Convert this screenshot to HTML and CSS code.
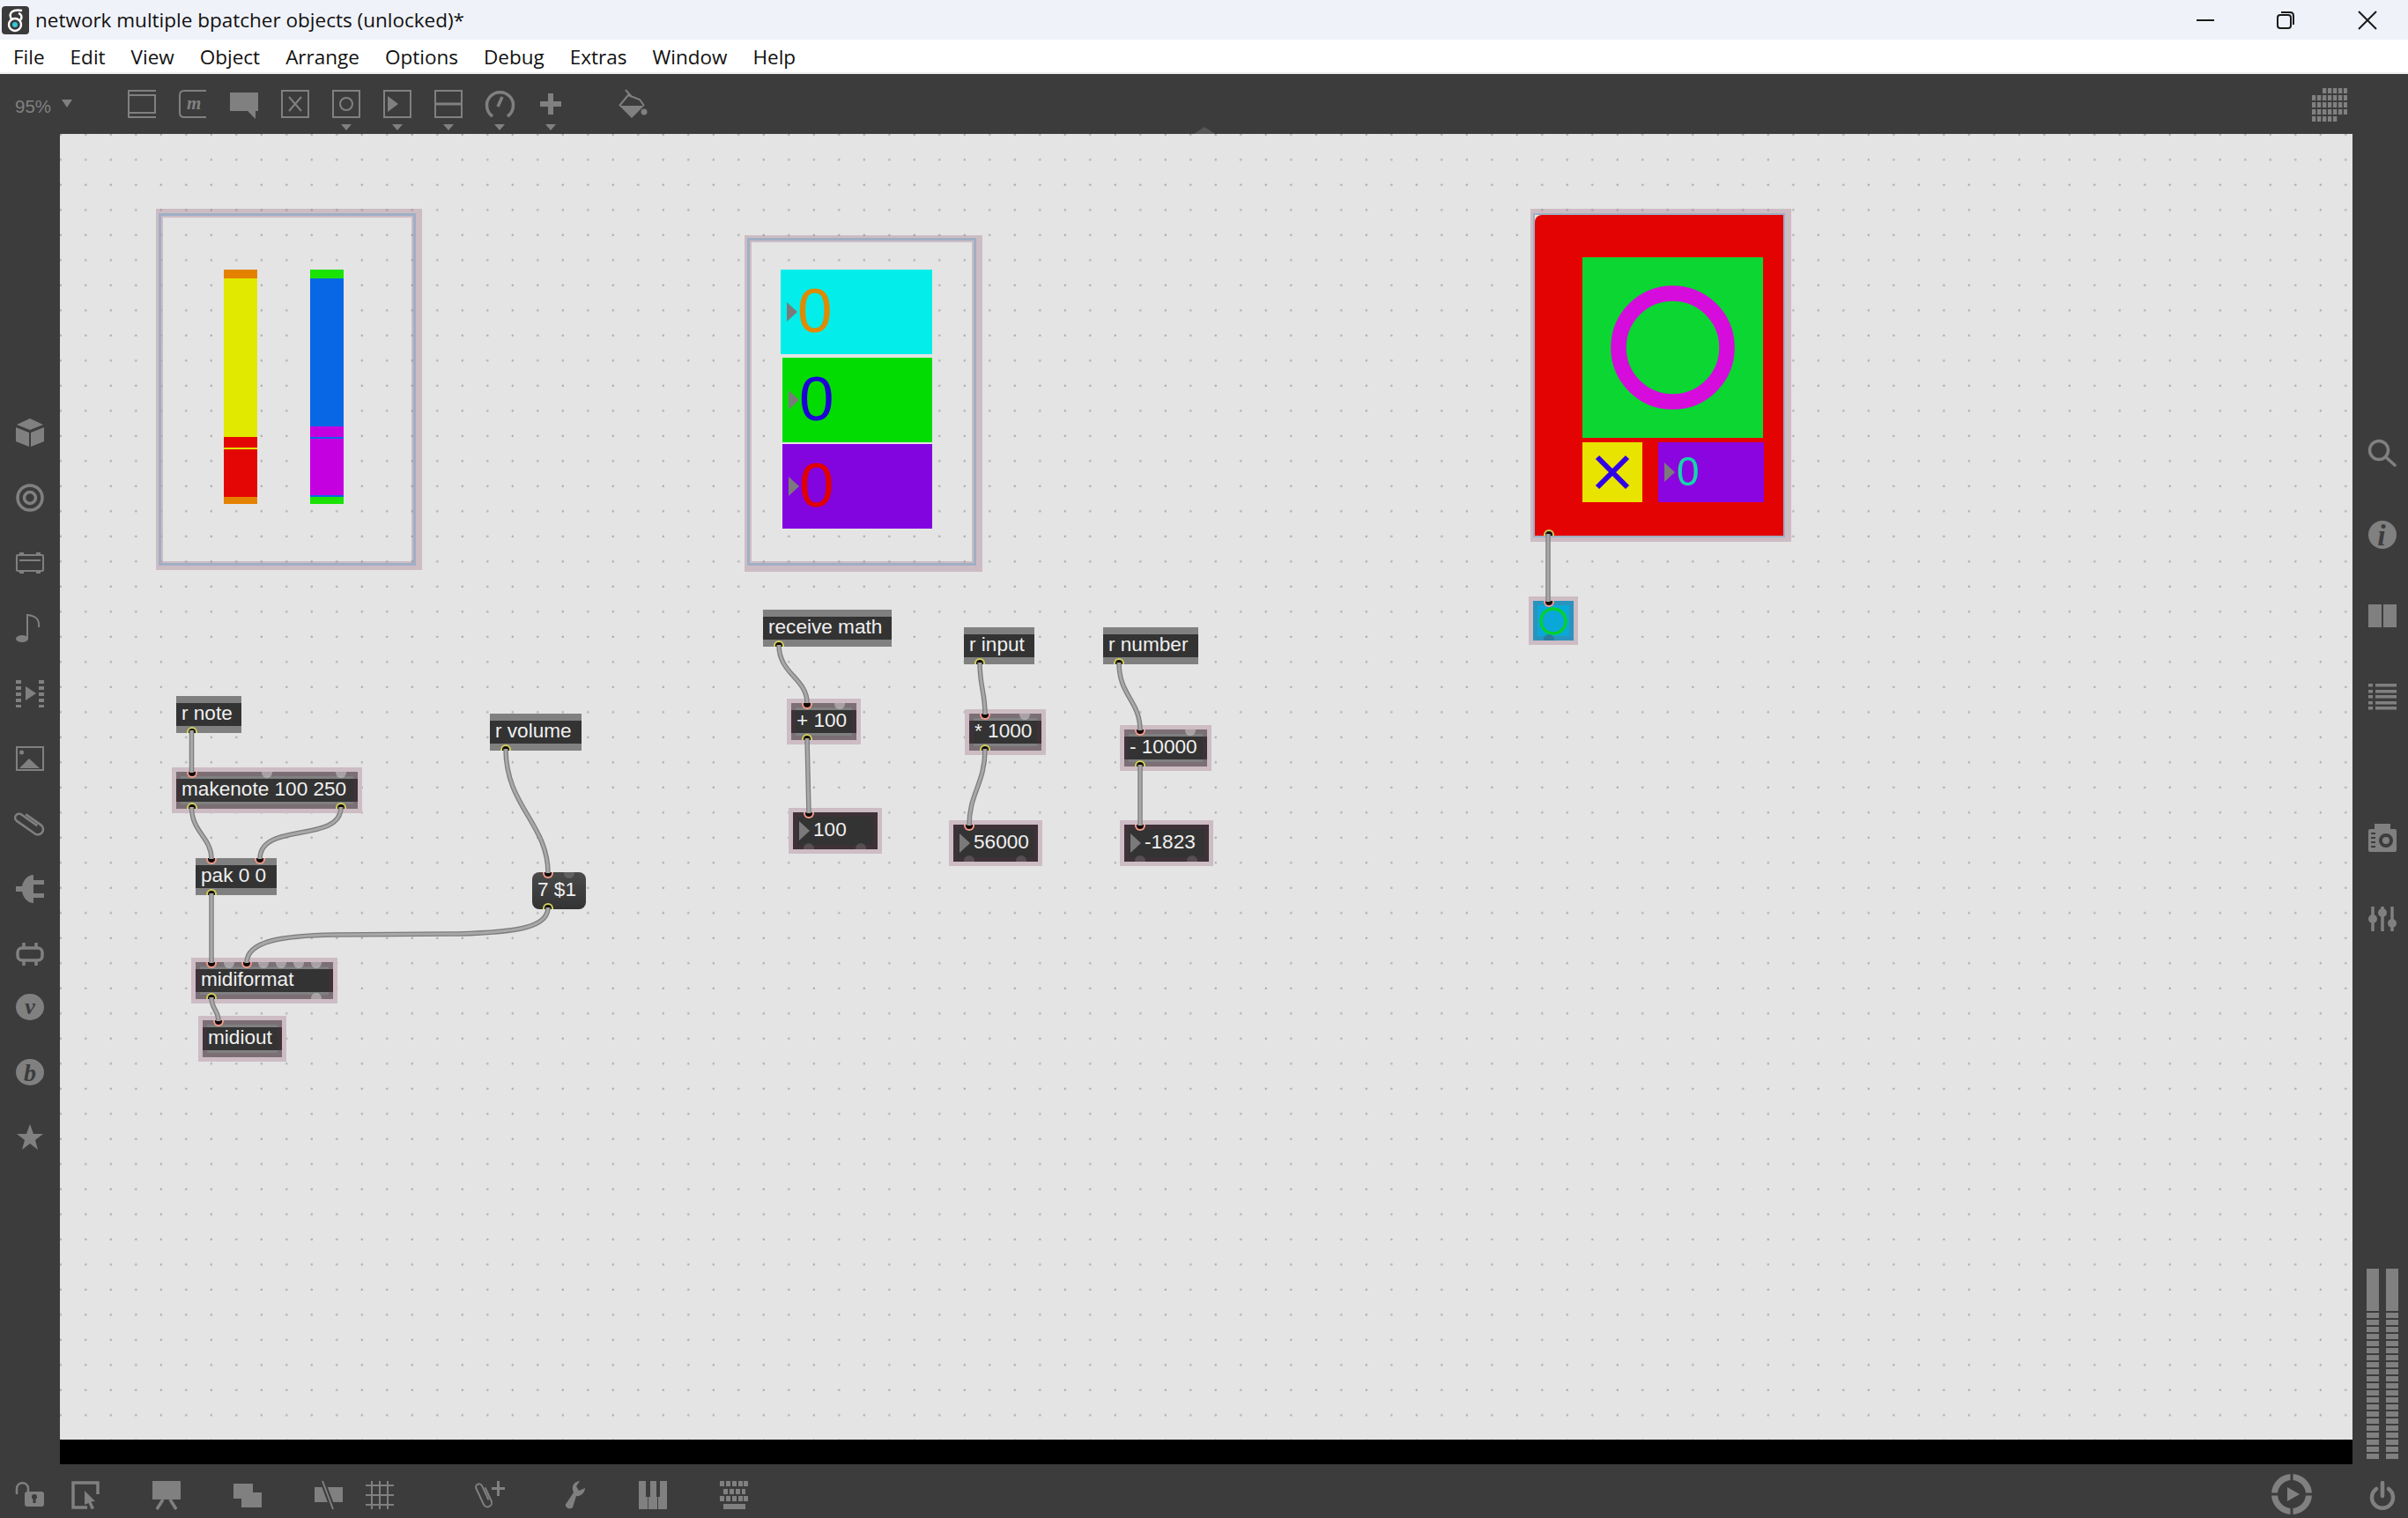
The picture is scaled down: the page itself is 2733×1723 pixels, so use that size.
FILE: index.html
```html
<!DOCTYPE html>
<html lang="en">

<head>
    <meta charset="UTF-8">
    <title>network multiple bpatcher objects (unlocked)*</title>
    <link rel="stylesheet" href="styles.css">
</head>

<body>
    <header class="titlebar">
        <svg class="app-icon" viewBox="0 0 31 32">
            <rect width="31" height="32" rx="4" fill="#3a3a3a" />
            <circle cx="15" cy="21" r="7" fill="none" stroke="#fff" stroke-width="2.4" />
            <path d="M11 15C7 7 13 3 23 5M21 16C24 12 22 9 19 8" fill="none" stroke="#fff" stroke-width="2.4" />
            <circle cx="15" cy="21" r="3" fill="#35c8d8" />
        </svg>
        <span class="title-text">network multiple bpatcher objects (unlocked)*</span>
        <div class="window-buttons">
            <svg class="win-min" viewBox="0 0 20 20"><path d="M0 10H20" /></svg>
            <svg viewBox="0 0 20 20"><rect x="1" y="4" width="15" height="15" rx="3" /><path d="M5 1H15Q19 1 19 5V15" /></svg>
            <svg viewBox="0 0 20 20"><path d="M0 0L20 20M20 0L0 20" /></svg>
        </div>
    </header>

    <nav class="menubar">
        <span>File</span>
        <span>Edit</span>
        <span>View</span>
        <span>Object</span>
        <span>Arrange</span>
        <span>Options</span>
        <span>Debug</span>
        <span>Extras</span>
        <span>Window</span>
        <span>Help</span>
    </nav>

    <div class="toolbar">
        <span class="zoom-level">95%</span>
        <span class="zoom-caret"></span>
        <div class="tools">
            <div class="tool"><svg class="ico" viewBox="0 0 32 32"><path class="line" d="M0 1H32M0 6H32M0 26H32M0 31H32M1 0V32M31 6V26" /></svg></div>
            <div class="tool"><svg class="ico" viewBox="0 0 32 32"><path class="line" d="M31 1H6Q1 1 1 6V26Q1 31 6 31H31" /><text class="ico-serif bold" x="9" y="22" font-size="21">m</text></svg></div>
            <div class="tool"><svg class="ico" viewBox="0 0 32 32"><path d="M0 3H32V24H29V33L20 24H0Z" /></svg></div>
            <div class="tool"><svg class="ico" viewBox="0 0 32 32"><rect class="line" x="1" y="1" width="30" height="30" /><path class="line" d="M9 8L23 24M23 8L9 24" /></svg></div>
            <div class="tool"><svg class="ico" viewBox="0 0 32 32"><rect class="line" x="1" y="1" width="30" height="30" /><circle class="line" cx="16" cy="16" r="7" /></svg><span class="tool-caret"></span></div>
            <div class="tool"><svg class="ico" viewBox="0 0 32 32"><rect class="line" x="1" y="1" width="30" height="30" /><path d="M5 7L17 16L5 25Z" /></svg><span class="tool-caret"></span></div>
            <div class="tool"><svg class="ico" viewBox="0 0 32 32"><rect class="line" x="1" y="1" width="30" height="30" /><path d="M2 14.500H30V17.500H2Z" /></svg><span class="tool-caret"></span></div>
            <div class="tool"><svg class="ico" viewBox="0 0 32 32"><path class="thick" d="M8 30A15 15 0 1 1 25 30" /><path class="thick" d="M14 19L19 8" /></svg><span class="tool-caret"></span></div>
            <div class="tool"><svg class="ico" viewBox="0 0 32 32"><path d="M13 4H19V13H28V19H19V28H13V19H4V13H13Z" /></svg><span class="tool-caret"></span></div>
        </div>
        <svg class="ico paint" viewBox="0 0 34 32"><path d="M2 18H30L16 32Z" /><path class="line" d="M2 18L12 6L25 11L30 18M9 0L16 8" /><circle cx="30" cy="25" r="3.500" /></svg>
        <svg class="ico patcher-grid" viewBox="0 0 40 38">
            <defs><pattern id="cells" width="6" height="8" patternUnits="userSpaceOnUse"><rect width="4.300" height="6" /></pattern></defs>
            <path fill="url(#cells)" d="M12 0H42V32H30V40H0V8H12Z" />
        </svg>
    </div>

    <div class="workspace">
        <aside class="sidebar left-bar">
            <div class="slot"><svg class="ico" viewBox="0 0 32 32"><path d="M16 0L31 7L16 13L1 7ZM0 10L15 16V32L0 26ZM32 10L17 16V32L32 26Z" /></svg></div>
            <div class="slot"><svg class="ico" viewBox="0 0 32 32"><circle class="thick" cx="16" cy="16" r="14" /><circle class="thick" cx="16" cy="16" r="6.500" /></svg></div>
            <div class="slot"><svg class="ico" viewBox="0 0 32 32"><rect class="line" x="1" y="7" width="30" height="18" rx="1" /><path class="line" d="M4 13H28" /><path d="M4 4H9V8H4ZM23 4H28V8H23ZM4 24H9V28H4ZM23 24H28V28H23Z" /></svg></div>
            <div class="slot"><svg class="ico" viewBox="0 0 32 32"><ellipse cx="7" cy="28" rx="7" ry="4" /><path class="line" d="M13 28V1C22 2 27 5 26 15" /></svg></div>
            <div class="slot"><svg class="ico" viewBox="0 0 32 32"><path d="M0 1H6V5H0ZM0 8H6V12H0ZM0 15H6V19H0ZM0 22H6V26H0ZM0 29H6V32H0ZM26 1H32V5H26ZM26 8H32V12H26ZM26 15H32V19H26ZM26 22H32V26H26ZM26 29H32V32H26ZM11 8L23 16L11 24Z" /></svg></div>
            <div class="slot"><svg class="ico" viewBox="0 0 32 32"><rect class="line" x="1" y="3" width="30" height="26" /><circle cx="6.500" cy="9" r="2.500" /><path d="M4 27L15 16L27 27Z" /></svg></div>
            <div class="slot"><svg class="ico" viewBox="0 0 32 32"><path class="line-wide" transform="rotate(-55 16 16)" d="M22 6V27A6 6 0 0 1 10 27V2A4.500 4.500 0 0 1 19 2V24" /></svg></div>
            <div class="slot"><svg class="ico" viewBox="0 0 32 32"><path d="M20 0V32C13 32 8 25 7 19H0V13H7C8 7 13 0 20 0ZM20 6H32V11H20ZM20 21H32V26H20Z" /></svg></div>
            <div class="slot"><svg class="ico" viewBox="0 0 32 32"><rect class="thick" x="2" y="9" width="28" height="14" rx="5" /><path class="thick" d="M9 3V9M23 3V9M9 23V29M23 23V29" /></svg></div>
            <div class="slot tight"><svg class="ico" viewBox="0 0 32 32"><ellipse cx="16" cy="16" rx="16" ry="15" /><text class="ico-serif cut bold" x="16" y="24" font-size="26" text-anchor="middle">v</text></svg></div>
            <div class="slot"><svg class="ico" viewBox="0 0 32 32"><ellipse cx="16" cy="16" rx="16" ry="15" /><text class="ico-serif cut bold" x="16" y="26" font-size="28" text-anchor="middle">b</text></svg></div>
            <div class="slot"><svg class="ico" viewBox="0 0 32 32"><path d="M16 1L20 12H31L22 19L25 30L16 23L7 30L10 19L1 12H12Z" /></svg></div>
        </aside>

        <div class="patcher-column">
            <main class="canvas">
                <span class="notch"></span>

                <div class="bpatcher bp-sliders">
                    <div class="slider slider-warm"></div>
                    <div class="slider slider-cool"></div>
                </div>

                <div class="bpatcher bp-numbers">
                    <div class="big-num num-cyan"><span class="arrow"></span>0</div>
                    <div class="big-num num-green"><span class="arrow"></span>0</div>
                    <div class="big-num num-purple"><span class="arrow"></span>0</div>
                </div>

                <div class="bpatcher bp-panel">
                    <div class="panel-red">
                        <svg class="panel-button" viewBox="0 0 205 205"><circle cx="102.500" cy="102.500" r="61.500" /></svg>
                        <div class="panel-row">
                            <svg class="panel-toggle" viewBox="0 0 68 68"><path d="M17 17L51 51M51 17L17 51" /></svg>
                            <div class="panel-num"><span class="arrow"></span>0</div>
                        </div>
                    </div>
                    <div class="ports bottom"><span class="port out"></span></div>
                </div>

                <div class="obj o-rnote">r note
                    <div class="ports bottom"><span class="port out"></span></div>
                </div>
                <div class="obj hot o-makenote">makenote 100 250
                    <div class="ports top"><span class="port in"></span><span class="port idle"></span><span class="port idle"></span></div>
                    <div class="ports bottom"><span class="port out"></span><span class="port out"></span></div>
                </div>
                <div class="obj o-pak">pak 0 0
                    <div class="ports top"><span class="port in"></span><span class="port in"></span></div>
                    <div class="ports bottom"><span class="port out"></span></div>
                </div>
                <div class="obj o-rvolume">r volume
                    <div class="ports bottom"><span class="port out"></span></div>
                </div>
                <div class="obj message o-seven">7 $1
                    <div class="ports top"><span class="port in"></span><span class="port idle"></span></div>
                    <div class="ports bottom"><span class="port out"></span></div>
                </div>
                <div class="obj hot o-midiformat">midiformat
                    <div class="ports top"><span class="port in"></span><span class="port idle"></span><span class="port in"></span><span class="port idle"></span><span class="port idle"></span><span class="port idle"></span><span class="port idle"></span></div>
                    <div class="ports bottom"><span class="port out"></span><span class="port idle"></span></div>
                </div>
                <div class="obj hot o-midiout">midiout
                    <div class="ports top"><span class="port in"></span></div>
                </div>

                <div class="obj o-receive">receive math
                    <div class="ports bottom"><span class="port out"></span></div>
                </div>
                <div class="obj hot o-plus">+ 100
                    <div class="ports top"><span class="port in"></span><span class="port idle"></span></div>
                    <div class="ports bottom"><span class="port out"></span></div>
                </div>
                <div class="obj hot numbox o-n100"><span class="arrow"></span>100
                    <div class="ports top"><span class="port in"></span></div>
                    <div class="ports bottom"><span class="port idle"></span><span class="port idle"></span></div>
                </div>

                <div class="obj o-rinput">r input
                    <div class="ports bottom"><span class="port out"></span></div>
                </div>
                <div class="obj hot o-times">* 1000
                    <div class="ports top"><span class="port in"></span><span class="port idle"></span></div>
                    <div class="ports bottom"><span class="port out"></span></div>
                </div>
                <div class="obj hot numbox o-n56000"><span class="arrow"></span>56000
                    <div class="ports top"><span class="port in"></span></div>
                    <div class="ports bottom"><span class="port idle"></span><span class="port idle"></span></div>
                </div>

                <div class="obj o-rnumber">r number
                    <div class="ports bottom"><span class="port out"></span></div>
                </div>
                <div class="obj hot o-minus">- 10000
                    <div class="ports top"><span class="port in"></span><span class="port idle"></span></div>
                    <div class="ports bottom"><span class="port out"></span></div>
                </div>
                <div class="obj hot numbox o-n1823"><span class="arrow"></span>-1823
                    <div class="ports top"><span class="port in"></span></div>
                    <div class="ports bottom"><span class="port idle"></span><span class="port idle"></span></div>
                </div>

                <div class="bang">
                    <svg viewBox="0 0 46 45"><circle cx="23" cy="23" r="14" /></svg>
                    <div class="ports top"><span class="port in"></span></div>
                    <div class="ports bottom"><span class="port idle"></span></div>
                </div>

                <!-- cords use page coordinates, the viewBox shifts them onto the canvas -->
                <svg class="cords" viewBox="68 152 2602 1482">
                    <g class="cord-edge">
                        <path id="c1" d="M217.500 829V877" />
                        <path id="c2" d="M217.500 916C217.500 945 240 950 240 975" />
                        <path id="c3" d="M387 916C387 958 295 932 295 975" />
                        <path id="c4" d="M574 850C574 915 622 935 622 991" />
                        <path id="c5" d="M240 1014V1093" />
                        <path id="c6" d="M622 1030C622 1052 590 1058 520 1060L380 1061C320 1062 280 1068 280 1093" />
                        <path id="c7" d="M240 1132C240 1146 248 1146 248 1159" />
                        <path id="c8" d="M884 732C884 765 916 770 916 798" />
                        <path id="c9" d="M916 838L918 923" />
                        <path id="c10" d="M1112 752C1112 780 1118 785 1118 811" />
                        <path id="c11" d="M1118 850C1118 890 1100 900 1100 937" />
                        <path id="c12" d="M1270 752C1270 790 1294 795 1294 829" />
                        <path id="c13" d="M1294 868V937" />
                        <path id="c14" d="M1757 606V683" />
                    </g>
                    <g class="cord-core">
                        <use href="#c1" /><use href="#c2" /><use href="#c3" /><use href="#c4" /><use href="#c5" /><use href="#c6" /><use href="#c7" />
                        <use href="#c8" /><use href="#c9" /><use href="#c10" /><use href="#c11" /><use href="#c12" /><use href="#c13" /><use href="#c14" />
                    </g>
                </svg>
            </main>
            <div class="status-strip"></div>
        </div>

        <aside class="sidebar right-bar">
            <div class="slot"><svg class="ico" viewBox="0 0 32 32"><circle class="thick" cx="12" cy="12" r="10.500" /><path class="thick round" d="M20 20L30 29" /></svg></div>
            <div class="slot"><svg class="ico" viewBox="0 0 32 32"><ellipse cx="16" cy="16" rx="16" ry="16" /><text class="ico-serif cut bold" x="15" y="28" font-size="34" text-anchor="middle">i</text></svg></div>
            <div class="slot"><svg class="ico" viewBox="0 0 32 32"><path d="M0 3H15V29H0ZM17 3H32V29H17Z" /></svg></div>
            <div class="slot"><svg class="ico" viewBox="0 0 32 32"><path d="M0 1H5V4.500H0ZM8 1H32V4.500H8ZM0 8H5V11.500H0ZM8 8H32V11.500H8ZM0 14H5V17.500H0ZM8 14H32V17.500H8ZM0 21H5V24.500H0ZM8 21H32V24.500H8ZM0 27H5V30.500H0ZM8 27H32V30.500H8Z" /></svg></div>
            <div class="slot camera"><svg class="ico" viewBox="0 0 32 32"><path d="M7 0H25V6H30Q32 6 32 8V30Q32 32 30 32H2Q0 32 0 30V8Q0 6 2 6H7Z" /><circle class="cut-ring" cx="20" cy="19" r="6" /><path class="cut-fill" d="M3 10H8V12H3ZM3 15H8V17H3ZM3 20H8V22H3ZM3 25H8V27H3Z" /></svg></div>
            <div class="slot sliders"><svg class="ico" viewBox="0 0 32 32"><path class="thick" d="M5 2V30M16 2V30M27 2V30" /><circle cx="5" cy="16" r="5" /><circle cx="16" cy="9" r="5" /><circle cx="27" cy="21" r="5" /></svg></div>
            <div class="meter">
                <div class="meter-col"><div class="meter-peak"></div><div class="meter-steps"></div></div>
                <div class="meter-col"><div class="meter-peak"></div><div class="meter-steps"></div></div>
            </div>
        </aside>
    </div>

    <footer class="bottombar">
        <svg class="ico b-lock" viewBox="0 0 33 28"><path class="line-wide" d="M2 14V8C2 -1 15 -1 15 8V11" /><rect x="11" y="11" width="22" height="17" rx="3" /><circle class="cut-fill" cx="22" cy="17" r="3" /><path class="cut-fill" d="M20.500 18H23.500V24H20.500Z" /></svg>
        <svg class="ico b-present" viewBox="0 0 32 32"><path class="thick" d="M30 15V2H2V30H18" /><path d="M15 11L27 23L22.500 23.500L26 31L22.500 32L19.500 25L15 27Z" /></svg>
        <svg class="ico b-gap" viewBox="0 0 32 32"><path d="M0 0H32V21H0Z" /><path class="thick" d="M12 21L5 32M20 21L27 32" /></svg>
        <svg class="ico b-gap" viewBox="0 0 32 32"><path d="M0 3H22V20H0Z" /><path class="gap-edge" d="M9 13H32V30H9Z" /></svg>
        <svg class="ico b-gap" viewBox="0 0 32 32"><path d="M0 7H32V24H0Z" /><path class="slash-cut" d="M9 0L21 32" /><path class="line" d="M9 0L21 32" /></svg>
        <svg class="ico b-near" viewBox="0 0 32 32"><path class="line" d="M7 0V32M16 0V32M25 0V32M0 5H32M0 16H32M0 27H32" /></svg>
        <svg class="ico b-far" viewBox="0 0 32 32"><path class="line-wide" transform="translate(-3 3) rotate(-25 14 16) scale(0.8)" d="M22 6V27A6 6 0 0 1 10 27V2A4.500 4.500 0 0 1 19 2V24" /><path d="M23 0H26V7H32V10H26V17H23V10H17V7H23Z" /></svg>
        <svg class="ico b-gap" viewBox="0 0 32 32"><path d="M17 30C13 34 6 28 10 25L18 13C15 6 18 1 25 0L21 6L24 11L31 8C31 13 26 18 21 17Z" /></svg>
        <svg class="ico b-gap" viewBox="0 0 32 32"><path d="M0 0H8V18H10.200V32H0ZM13 18V0H20V18H21V32H11V18ZM24 0H32V32H22V18H24Z" /></svg>
        <svg class="ico b-gap" viewBox="0 0 32 32"><path d="M0 0H5V6H0ZM7 0H12V6H7ZM14 0H19V6H14ZM21 0H26V6H21ZM27 0H32V6H27ZM4 9H9V15H4ZM11 9H16V15H11ZM18 9H23V15H18ZM25 9H29V15H25ZM0 17H5V23H0ZM7 17H12V23H7ZM14 17H19V23H14ZM21 17H26V23H21ZM27 17H32V23H27ZM4 26H29V32H4Z" /></svg>
        <svg class="ico b-play" viewBox="0 0 46 46"><circle class="ring" cx="23" cy="23" r="19.500" /><path class="gap-cut" d="M23 0V46M0 23H46" /><path d="M18 15L32 23L18 31Z" /></svg>
        <svg class="ico b-power" viewBox="0 0 28 32"><path class="wide-round" d="M7 9A12 12 0 1 0 21 9" /><path class="wide-round" d="M14 2V17" /></svg>
    </footer>
</body>

</html>
```

FILE: styles.css
```css
* {
    box-sizing: border-box;
}

html,
body {
    margin: 0;
    height: 100%;
}

body {
    display: flex;
    flex-direction: column;
    overflow: hidden;
    font-family: "Open Sans", "Liberation Sans", sans-serif;
    background-color: #3c3c3c;
}

/* window chrome */
.titlebar {
    height: 45px;
    background-color: #f0f2f9;
    display: flex;
    align-items: center;
    padding-left: 2px;
    color: #111;
    font-size: 22.5px;
}

.app-icon {
    width: 31px;
    height: 32px;
}

.title-text {
    margin-left: 7px;
}

.window-buttons {
    margin-left: auto;
    display: flex;
    gap: 73px;
    padding-right: 36px;
}

.window-buttons svg {
    width: 20px;
    height: 20px;
    overflow: visible;
    fill: none;
    stroke: #1a1a1a;
    stroke-width: 2;
}

.window-buttons .win-min {
    margin-right: -2px;
}

.menubar {
    height: 39px;
    padding-top: 2px;
    background-color: #fff;
    border-bottom: 2px solid #f0f0f0;
    display: flex;
    align-items: center;
    gap: 29px;
    padding-left: 15px;
    color: #111;
    font-size: 22.5px;
}

/* icons */
.ico {
    display: block;
    width: 32px;
    height: 32px;
    fill: #808080;
    overflow: visible;
}

.ico .line,
.ico .thick,
.ico .line-wide,
.ico .ring,
.ico .wide-round {
    fill: none;
    stroke: #808080;
}

.ico .line {
    stroke-width: 2;
}

.ico .line-wide {
    stroke-width: 2.500;
}

.ico .thick {
    stroke-width: 3.500;
}

.ico .round,
.ico .wide-round {
    stroke-linecap: round;
}

.ico .wide-round {
    stroke-width: 4.500;
}

.ico .ring {
    stroke-width: 7;
}

.ico-serif {
    font-family: "Liberation Serif", serif;
    font-style: italic;
}

.ico .cut,
.ico .cut-fill {
    fill: #3c3c3c;
}

.ico .bold {
    font-weight: bold;
}

.ico .cut-ring {
    fill: #808080;
    stroke: #3c3c3c;
    stroke-width: 4;
}

.ico .gap-edge {
    stroke: #3c3c3c;
    stroke-width: 0;
}

.ico .slash-cut {
    fill: none;
    stroke: #3c3c3c;
    stroke-width: 6;
}

.ico .gap-cut {
    fill: none;
    stroke: #3c3c3c;
    stroke-width: 3;
}

/* top toolbar */
.toolbar {
    height: 68px;
    display: flex;
    align-items: flex-start;
    padding-top: 18px;
    color: #808080;
}

.zoom-level {
    margin-left: 17px;
    margin-top: 7px;
    font-family: "Liberation Sans", sans-serif;
    font-size: 20.500px;
}

.zoom-caret {
    margin: 11px 0 0 12px;
    border-top: 9px solid #808080;
    border-left: 6px solid transparent;
    border-right: 6px solid transparent;
}

.tools {
    margin-left: 63px;
    display: flex;
    gap: 26px;
}

.tool {
    width: 32px;
    height: 46px;
    display: flex;
    flex-direction: column;
    align-items: center;
}

.tool-caret {
    margin-top: 7px;
    border-top: 7px solid #808080;
    border-left: 6px solid transparent;
    border-right: 6px solid transparent;
}

.paint {
    width: 34px;
    margin-left: 60px;
}

.patcher-grid {
    margin-left: auto;
    margin-right: 69px;
    width: 40px;
    height: 38px;
    overflow: hidden;
    margin-top: -2px;
}

/* middle of the window */
.workspace {
    flex: 1;
    min-height: 0;
    display: flex;
}

.sidebar {
    display: flex;
    flex-direction: column;
    align-items: center;
}

.left-bar {
    width: 68px;
    padding: 302px 0 0 0;
}

.slot {
    height: 74px;
    display: flex;
    align-items: center;
}

.slot.tight {
    height: 60px;
    margin-top: -7px;
    margin-bottom: 7px;
}

.right-bar {
    width: 63px;
    padding: 317px 0 0 5px;
    height: 100%;
}

.right-bar .slot {
    height: 92px;
}

.right-bar .camera {
    margin-top: 68px;
}

.meter {
    margin-top: auto;
    margin-bottom: 6px;
    display: flex;
    gap: 8px;
}

.meter-col {
    width: 14px;
}

.meter-peak {
    height: 48px;
    margin-bottom: 2px;
    background-color: #808080;
}

.meter-steps {
    height: 166px;
    background: repeating-linear-gradient(#808080 0 6px, transparent 6px 8px);
}

.patcher-column {
    flex: 1;
    display: flex;
    flex-direction: column;
}

.canvas {
    flex: 1;
    position: relative;
    background-color: #e4e4e4;
    background-image: radial-gradient(circle at 1.800px 1.800px, #b0b0b0 0.8px, rgba(176, 176, 176, 0) 1.700px);
    background-size: 28.500px 28.500px;
    background-position: -1px -1px;
}

.status-strip {
    height: 28px;
    background-color: #000;
}

.notch {
    position: absolute;
    left: 1287px;
    top: -8px;
    border-bottom: 8px solid #565656;
    border-left: 12px solid transparent;
    border-right: 12px solid transparent;
}

/* patcher boxes */
.obj {
    position: absolute;
    height: 42px;
    padding: 7px 0 0 6px;
    line-height: 26px;
    font-family: "Liberation Sans", sans-serif;
    font-size: 22.600px;
    white-space: nowrap;
    color: #f0f0f0;
    background: linear-gradient(#808080 8px, #333 8px, #333 34px, #808080 34px);
}

.obj.hot {
    box-shadow: 0 0 0 5px #cdbcc4, inset 0 0 0 5px rgba(105, 45, 75, 0.22);
}

.message {
    border-radius: 8px;
    background: linear-gradient(#4a4a4a, #333);
    padding-left: 6px;
}

.numbox {
    padding-left: 23px;
    background: #333;
}

.arrow {
    position: absolute;
    left: 7px;
    top: 10px;
    border-left: 12px solid #7a7a7a;
    border-top: 11px solid transparent;
    border-bottom: 11px solid transparent;
}

.ports {
    position: absolute;
    left: 12px;
    right: 13px;
    display: flex;
    justify-content: space-between;
}

.ports.top {
    top: 0;
}

.ports.bottom {
    bottom: 0;
}

.port {
    width: 12px;
    height: 7px;
}

.top .port {
    border-radius: 0 0 6px 6px;
}

.bottom .port {
    border-radius: 6px 6px 0 0;
}

.port.in {
    background-color: #120a0a;
    border: 2px solid #f09a8a;
    border-top: 0;
}

.port.out {
    background-color: #120a0a;
    border: 2px solid #cfcf5a;
    border-bottom: 0;
}

.port.idle {
    background-color: rgba(255, 255, 255, 0.35);
}

.numbox .port.idle,
.message .port.idle {
    background-color: rgba(255, 255, 255, 0.14);
}

.o-rnote { left: 132px; top: 638px; width: 74px; }
.o-makenote { left: 132px; top: 724px; width: 206px; }
.o-pak { left: 154px; top: 822px; width: 92px; }
.o-rvolume { left: 488px; top: 658px; width: 104px; }
.o-seven { left: 536px; top: 838px; width: 61px; }
.o-midiformat { left: 154px; top: 940px; width: 156px; }
.o-midiout { left: 162px; top: 1006px; width: 90px; }
.o-receive { left: 798px; top: 540px; width: 146px; }
.o-plus { left: 830px; top: 646px; width: 74px; }
.o-n100 { left: 832px; top: 770px; width: 96px; }
.o-rinput { left: 1026px; top: 560px; width: 80px; }
.o-times { left: 1032px; top: 658px; width: 82px; }
.o-n56000 { left: 1014px; top: 784px; width: 96px; }
.o-rnumber { left: 1184px; top: 560px; width: 108px; }
.o-minus { left: 1208px; top: 676px; width: 94px; }
.o-n1823 { left: 1208px; top: 784px; width: 96px; }

/* bpatchers */
.bpatcher {
    position: absolute;
    border: 3px solid #9fafc4;
    box-shadow: 0 0 0 5px rgba(162, 114, 137, 0.35), inset 0 0 0 2px rgba(162, 114, 137, 0.35);
}

.bp-sliders {
    left: 112px;
    top: 90px;
    width: 292px;
    height: 400px;
    display: flex;
    gap: 60px;
    padding: 61px 0 0 71px;
    box-shadow: 2px 0 0 5px rgba(162, 114, 137, 0.35), inset 0 0 0 2px rgba(162, 114, 137, 0.35);
}

.slider {
    width: 38px;
    height: 266px;
}

.slider-warm {
    background: linear-gradient(#e48200 10px, #e2e900 10px, #e2e900 190px, #e40505 190px, #e40505 202px,
            #e2e900 202px, #e2e900 204px, #e40505 204px, #e40505 258px, #e48200 258px);
}

.slider-cool {
    background: linear-gradient(#1ae205 10px, #0767e5 10px, #0767e5 178px, #c500e0 178px, #c500e0 190px,
            #0767e5 190px, #0767e5 192px, #c500e0 192px, #c500e0 256px, #0767e5 256px, #0767e5 258px, #1ae205 258px);
}

.bp-numbers {
    left: 780px;
    top: 118px;
    width: 260px;
    height: 372px;
    padding: 33px 0 0 37px;
    display: flex;
    flex-direction: column;
    box-shadow: 2px 2px 0 5px rgba(162, 114, 137, 0.35), inset 0 0 0 2px rgba(162, 114, 137, 0.35);
}

.big-num {
    position: relative;
    width: 170px;
    height: 96px;
    padding-left: 19px;
    line-height: 94px;
    font-family: "Liberation Sans", sans-serif;
    font-size: 71px;
}

.num-cyan {
    margin-left: -2px;
    width: 172px;
    margin-bottom: 4px;
    background-color: #03eeea;
    color: #e08a00;
}

.num-green {
    margin-bottom: 2px;
    background-color: #03dc03;
    color: #2000d8;
}

.num-purple {
    background-color: #8205e0;
    color: #e00000;
}

.big-num .arrow {
    top: 37px;
}

.bp-panel {
    left: 1672px;
    top: 90px;
    width: 286px;
    height: 368px;
    border-width: 2px;
    box-shadow: 2px 0 0 5px rgba(162, 114, 137, 0.35);
}

.bp-panel .ports {
    left: 10px;
}

.panel-red {
    height: 100%;
    padding: 48px 0 0 54px;
    background-color: #e40303;
    border-top-left-radius: 8px;
}

.panel-button {
    display: block;
    width: 205px;
    height: 205px;
    background-color: #0bd632;
    fill: none;
    stroke: #d50cdc;
    stroke-width: 17.500;
}

.panel-row {
    display: flex;
    gap: 18px;
    margin-top: 5px;
}

.panel-toggle {
    width: 68px;
    height: 68px;
    background-color: #e8e400;
    fill: none;
    stroke: #3000e8;
    stroke-width: 6;
}

.panel-num {
    position: relative;
    width: 120px;
    height: 68px;
    padding-left: 21px;
    line-height: 66px;
    font-family: "Liberation Sans", sans-serif;
    font-size: 46px;
    background-color: #8a05e0;
    color: #10d8a8;
}

.panel-num .arrow {
    top: 23px;
}

.bang {
    position: absolute;
    left: 1672px;
    top: 530px;
    width: 46px;
    height: 45px;
    background-color: #0aa8d8;
    box-shadow: 0 0 0 5px #cdbcc4, inset 0 0 0 5px #2a93bd;
}

.bang svg {
    display: block;
    width: 46px;
    height: 45px;
    fill: none;
    stroke: #06d030;
    stroke-width: 3.500;
}

.bang .port.idle {
    background-color: #2a7a9f;
}

/* patch cords */
.cords {
    position: absolute;
    left: 0;
    top: 0;
    width: 2602px;
    height: 1482px;
    fill: none;
}

.cord-edge {
    stroke: #7c7c7c;
    stroke-width: 5.500;
}

.cord-core {
    stroke: #a8a8a8;
    stroke-width: 3;
}

/* bottom toolbar */
.bottombar {
    height: 61px;
    display: flex;
    align-items: flex-start;
    padding: 19px 0 0 17px;
}

.b-lock {
    width: 33px;
    height: 28px;
    margin-top: 1px;
}

.b-present {
    margin-left: 31px;
}

.b-gap {
    margin-left: 60px;
}

.b-near {
    margin-left: 26px;
}

.b-far {
    margin-left: 94px;
}

.b-play {
    width: 46px;
    height: 46px;
    margin-left: auto;
    margin-top: -8px;
}

.b-power {
    width: 28px;
    margin-left: 66px;
    margin-right: 15px;
}
```
